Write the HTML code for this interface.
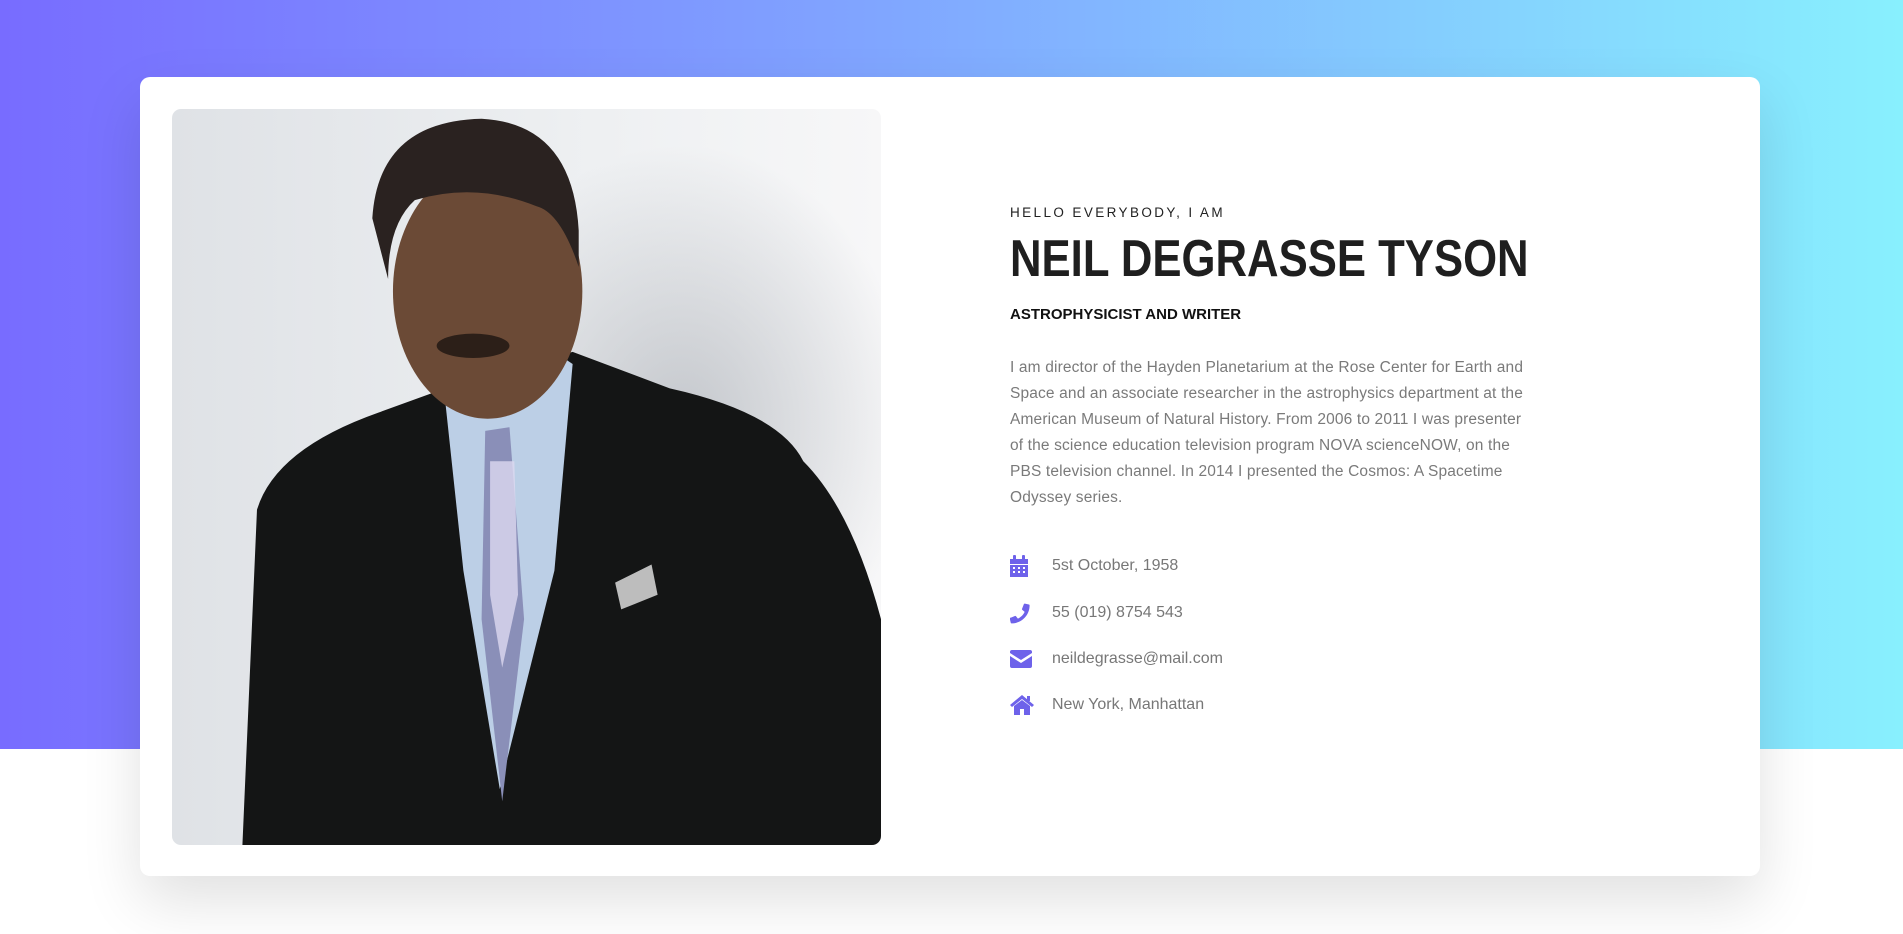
<!DOCTYPE html>
<html><head><meta charset="utf-8"><style>
*{margin:0;padding:0;box-sizing:border-box}
body{width:1903px;height:934px;overflow:hidden;background:#fff;font-family:"Liberation Sans",sans-serif;position:relative}
.bg{position:absolute;left:0;top:0;width:1903px;height:749px;background:linear-gradient(90deg,#786cff 0%,#80a4ff 45%,#88f0fe 100%)}
.card{position:absolute;left:140px;top:77px;width:1620px;height:799px;background:#fff;border-radius:10px;box-shadow:0 25px 60px rgba(0,0,0,0.12)}
.photo{position:absolute;left:172px;top:109px;width:709px;height:736px;border-radius:9px;overflow:hidden}
.t{position:absolute;left:1010px;white-space:nowrap}
.hello{top:205px;font-size:13.5px;letter-spacing:2.4px;color:#222}
.name{top:229px;font-size:52px;font-weight:bold;color:#1f1f1f;transform:scaleX(0.84);transform-origin:left top;line-height:60px}
.sub{top:306px;font-size:15px;font-weight:bold;color:#111}
.p{top:355px;font-size:15.5px;line-height:26px;color:#7a7a7a;letter-spacing:0.15px}
.row{position:absolute;left:1010px;height:24px;display:flex;align-items:center}
.row span{position:absolute;left:42px;font-size:16px;color:#777;white-space:nowrap}
.row svg{fill:#6e62ea}
</style></head><body>
<div class="bg"></div>
<div class="card"></div>
<div class="photo">
<svg width="709" height="736" viewBox="0 0 584 606" preserveAspectRatio="none">
<defs><linearGradient id="g" x1="0" y1="0" x2="1" y2="0"><stop offset="0" stop-color="#dfe2e6"/><stop offset="0.6" stop-color="#eef0f2"/><stop offset="1" stop-color="#f7f7f8"/></linearGradient>
<radialGradient id="sh" cx="0.5" cy="0.5" r="0.5"><stop offset="0" stop-color="#c4c7cc"/><stop offset="1" stop-color="#c4c7cc" stop-opacity="0"/></radialGradient></defs>
<rect width="584" height="606" fill="url(#g)"/>
<ellipse cx="420" cy="260" rx="190" ry="230" fill="url(#sh)"/>
<path d="M58 606 L70 330 Q85 280 170 250 L225 230 L330 200 L410 230 Q500 250 520 290 Q560 330 584 420 L584 606 Z" fill="#141515"/>
<path d="M225 240 L245 200 L300 190 L330 210 L315 380 L270 560 L240 380 Z" fill="#bccfe6"/>
<path d="M258 265 L278 262 L290 420 L272 570 L255 420 Z" fill="#8a8fb8"/>
<path d="M262 290 L282 290 L285 400 L272 460 L262 400Z" fill="#dcd8f0" opacity="0.8"/>
<path d="M365 390 L395 375 L400 400 L370 412Z" fill="#bdbdbd"/>
<path d="M200 210 Q240 255 265 250 L300 190 L290 160 L205 160Z" fill="#1a1a1a"/>
<ellipse cx="260" cy="150" rx="78" ry="105" fill="#6b4a36"/>
<path d="M165 90 Q170 10 255 8 Q330 12 335 100 L335 130 Q320 85 300 80 Q250 60 200 75 Q178 95 178 140 Z" fill="#2a2220"/>
<ellipse cx="248" cy="195" rx="30" ry="10" fill="#2c1f18"/>
</svg>
</div>
<div class="t hello">HELLO EVERYBODY, I AM</div>
<div class="t name">NEIL DEGRASSE TYSON</div>
<div class="t sub">ASTROPHYSICIST AND WRITER</div>
<div class="t p">I am director of the Hayden Planetarium at the Rose Center for Earth and<br>Space and an associate researcher in the astrophysics department at the<br>American Museum of Natural History. From 2006 to 2011 I was presenter<br>of the science education television program NOVA scienceNOW, on the<br>PBS television channel. In 2014 I presented the Cosmos: A Spacetime<br>Odyssey series.</div>
<div class="row" style="top:554px"><svg width="18" height="22" viewBox="0 0 18 22"><rect x="3" y="0" width="3" height="5" rx="1"/><rect x="12" y="0" width="3" height="5" rx="1"/><path d="M0 4h18v5H0z"/><path d="M0 10h18v12H0z M3 12v2h2v-2z M8 12v2h2v-2z M13 12v2h2v-2z M3 16v2h2v-2z M8 16v2h2v-2z M13 16v2h2v-2z" fill-rule="evenodd"/></svg><span>5st October, 1958</span></div>
<div class="row" style="top:601px"><svg width="21" height="21" viewBox="0 0 512 512"><path d="M497 361l-105-45c-9-4-20-1-26 7l-46 57c-73-34-131-93-165-165l57-46c8-6 11-17 7-26L174 28c-4-10-15-15-26-13L51 38C41 40 34 49 34 59c0 243 196 439 439 439 10 0 19-7 21-17l23-97c3-11-3-22-13-26z" transform="translate(512 0) scale(-1 1)"/></svg><span>55 (019) 8754 543</span></div>
<div class="row" style="top:647px"><svg width="22" height="18" viewBox="0 0 22 18"><path d="M0 2 Q0 0 2 0 H20 Q22 0 22 2 V3 L11 10 L0 3Z"/><path d="M0 6 L11 13 L22 6 V16 Q22 18 20 18 H2 Q0 18 0 16Z"/></svg><span>neildegrasse@mail.com</span></div>
<div class="row" style="top:693px"><svg width="24" height="20" viewBox="0 0 24 20"><path d="M12 0 L24 10 L22 12 L12 4 L2 12 L0 10Z"/><path d="M4 11 L12 5 L20 11 V20 H14 V14 H10 V20 H4Z"/><rect x="17" y="1" width="3" height="5"/></svg><span>New York, Manhattan</span></div>
</body></html>
